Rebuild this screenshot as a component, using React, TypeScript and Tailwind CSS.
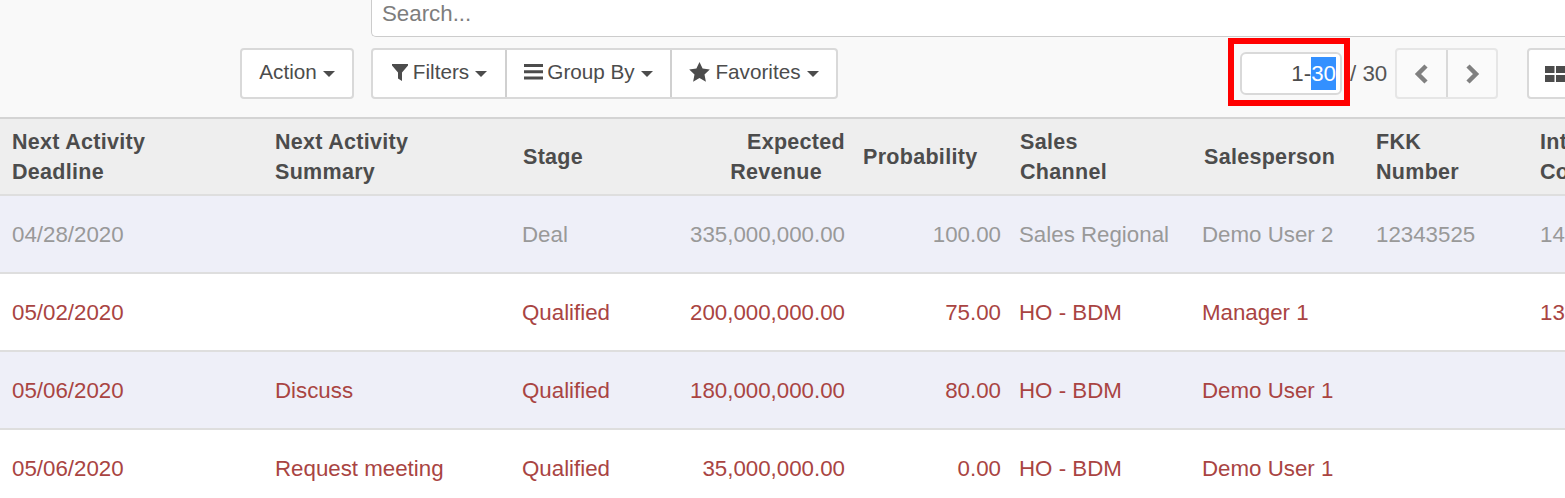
import React from "react";

const font = { fontFamily: '"Liberation Sans", Arial, sans-serif' };

function Caret() {
  return <span className="inline-block ml-[6px] mt-[4px] align-middle w-0 h-0 border-x-[6.5px] border-x-transparent border-t-[6px] border-t-[#4c4c4c] shrink-0" />;
}

function Funnel() {
  return (
    <svg width="18" height="18" viewBox="0 0 18 18" className="mr-[4px] shrink-0">
      <path d="M1 1h16v1.6L11 9.4V18l-4-2.6V9.4L1 2.6z" fill="#4c4c4c" />
    </svg>
  );
}
function Bars() {
  return (
    <svg width="19" height="18" viewBox="0 0 19 18" className="mr-[4px] shrink-0">
      <path d="M0 1h19v3H0zM0 7.3h19v3H0zM0 13.6h19v3H0z" fill="#4c4c4c" />
    </svg>
  );
}
function Star() {
  return (
    <svg width="21" height="20" viewBox="0 0 21 20" className="mr-[5px] shrink-0">
      <path d="M10.5 0l3.1 6.6 7.2.9-5.3 5 1.4 7.2-6.4-3.6-6.4 3.6 1.4-7.2-5.3-5 7.2-.9z" fill="#4c4c4c" />
    </svg>
  );
}

const cols = [263, 248, 167, 179, 156, 183, 174, 164, 100];

type Row = { tone: "gray" | "red"; bg: string; cells: string[] };
const rows: Row[] = [
  { tone: "gray", bg: "bg-[#eeeff8]", cells: ["04/28/2020", "", "Deal", "335,000,000.00", "100.00", "Sales Regional", "Demo User 2", "12343525", "142"] },
  { tone: "red", bg: "bg-white", cells: ["05/02/2020", "", "Qualified", "200,000,000.00", "75.00", "HO - BDM", "Manager 1", "", "132"] },
  { tone: "red", bg: "bg-[#eeeff8]", cells: ["05/06/2020", "Discuss", "Qualified", "180,000,000.00", "80.00", "HO - BDM", "Demo User 1", "", ""] },
  { tone: "red", bg: "bg-white", cells: ["05/06/2020", "Request meeting", "Qualified", "35,000,000.00", "0.00", "HO - BDM", "Demo User 1", "", ""] },
];

const headers: [string, string][] = [
  ["Next Activity", "Deadline"],
  ["Next Activity", "Summary"],
  ["Stage", ""],
  ["Expected", "Revenue"],
  ["Probability", ""],
  ["Sales", "Channel"],
  ["Salesperson", ""],
  ["FKK", "Number"],
  ["Int", "Co"],
];

const cellPad = ["pl-[12px]", "pl-[12px]", "pl-[11px]", "pr-[12px] text-right", "pr-[12px] text-right", "pl-[6px]", "pl-[6px]", "pl-[6px]", "pl-[6px]"];
const headPad = ["pl-[12px]", "pl-[12px]", "pl-[12px]", "pr-[12px] text-right", "pl-[6px]", "pl-[7px]", "pl-[8px]", "pl-[6px]", "pl-[6px]"];

export default function App() {
  return (
    <div className="w-[1565px] h-[498px] overflow-hidden bg-white text-[#4c4c4c] text-[22.3px]" style={font}>
      <div className="h-[119px] bg-[#f9f9f9] border-b-2 border-[#d4d4d4] flex flex-col">
        <div className="ml-[371px] h-[37px] bg-white border border-t-0 border-r-0 border-[#cccccc] rounded-bl-[5px] flex items-center pl-[10px] pb-[9px] text-[#7d7d7d]">
          Search...
        </div>
        <div className="mt-[11px] flex items-start h-[51px] w-[1565px]">
          <div className="ml-[240px] w-[114px] shrink-0 h-[51px] bg-white border-2 border-[#d9d9d9] rounded-[4px] flex items-center justify-center pb-[3px] text-[20.7px]">
            Action<Caret />
          </div>
          <div className="ml-[17px] w-[467px] shrink-0 h-[51px] bg-white border-2 border-[#d9d9d9] rounded-[4px] flex items-stretch text-[20.7px]">
            <div className="w-[134px] shrink-0 border-r-2 border-[#d0d0d0] flex items-center justify-center pb-[3px]">
              <Funnel />Filters<Caret />
            </div>
            <div className="w-[165px] shrink-0 border-r-2 border-[#d0d0d0] flex items-center justify-center pb-[3px]">
              <Bars />Group By<Caret />
            </div>
            <div className="flex-1 flex items-center justify-center pb-[3px]">
              <Star />Favorites<Caret />
            </div>
          </div>
          <div className="ml-[402px] shrink-0 relative flex items-center h-[51px]">
            <div className="w-[102px] h-[43px] bg-white border-2 border-[#d9d9d9] rounded-[6px] flex items-center justify-end pr-[4px]">
              1-<span className="bg-[#3390ff] text-white">30</span>
            </div>
            <span className="ml-[8px] text-[#555555] whitespace-nowrap">/ 30</span>
            <div className="absolute left-[-12px] top-[-10px] w-[122px] h-[68px] border-[6px] border-[#ff0000]" />
          </div>
          <div className="ml-[8px] w-[103px] shrink-0 h-[51px] bg-[#fafafa] border-2 border-[#e6e6e6] rounded-[4px] flex items-stretch">
            <div className="w-[51px] shrink-0 border-r-2 border-[#d9d9d9] flex items-center justify-center">
              <svg width="16" height="20" viewBox="0 0 16 20"><path d="M12 2L4 10l8 8" fill="none" stroke="#808080" strokeWidth="4.5" /></svg>
            </div>
            <div className="flex-1 flex items-center justify-center">
              <svg width="16" height="20" viewBox="0 0 16 20"><path d="M4 2l8 8-8 8" fill="none" stroke="#808080" strokeWidth="4.5" /></svg>
            </div>
          </div>
          <div className="ml-[29px] w-[60px] h-[51px] shrink-0 bg-white border-2 border-[#d9d9d9] rounded-l-[4px] flex items-center pl-[16px]">
            <svg width="21" height="18" viewBox="0 0 21 18"><path d="M0 1h9.5v7H0zM11 1h10v7H11zM0 10h9.5v7H0zM11 10h10v7H11z" fill="#4c4c4c" /></svg>
          </div>
        </div>
      </div>
      <table className="table-fixed border-collapse w-[1634px]">
        <colgroup>
          {cols.map((w, i) => <col key={i} style={{ width: w }} />)}
        </colgroup>
        <thead>
          <tr className="h-[76px] bg-[#eeeeee] border-b-2 border-[#dedede]">
            {headers.map(([a, b], i) => (
              <th key={i} className={`${headPad[i]} pt-[1px] font-bold text-left leading-[30px] text-[#4c4c4c] text-[21.5px] tracking-[0.3px] whitespace-nowrap`}>
                {i === 3 ? (
                  <div className="text-right">
                    <div>{a}</div>
                    <div className="pr-[23px]">{b}</div>
                  </div>
                ) : (
                  <div>{a}{b && <br />}{b}</div>
                )}
              </th>
            ))}
          </tr>
        </thead>
        <tbody>
          {rows.map((r, ri) => (
            <tr key={ri} className={`h-[78px] ${r.bg} border-b-2 border-[#dedede] ${r.tone === "gray" ? "text-[#999999]" : "text-[#a94442]"}`}>
              {r.cells.map((c, i) => (
                <td key={i} className={`${cellPad[i]} pt-[2px] whitespace-nowrap`}>{c}</td>
              ))}
            </tr>
          ))}
        </tbody>
      </table>
    </div>
  );
}
